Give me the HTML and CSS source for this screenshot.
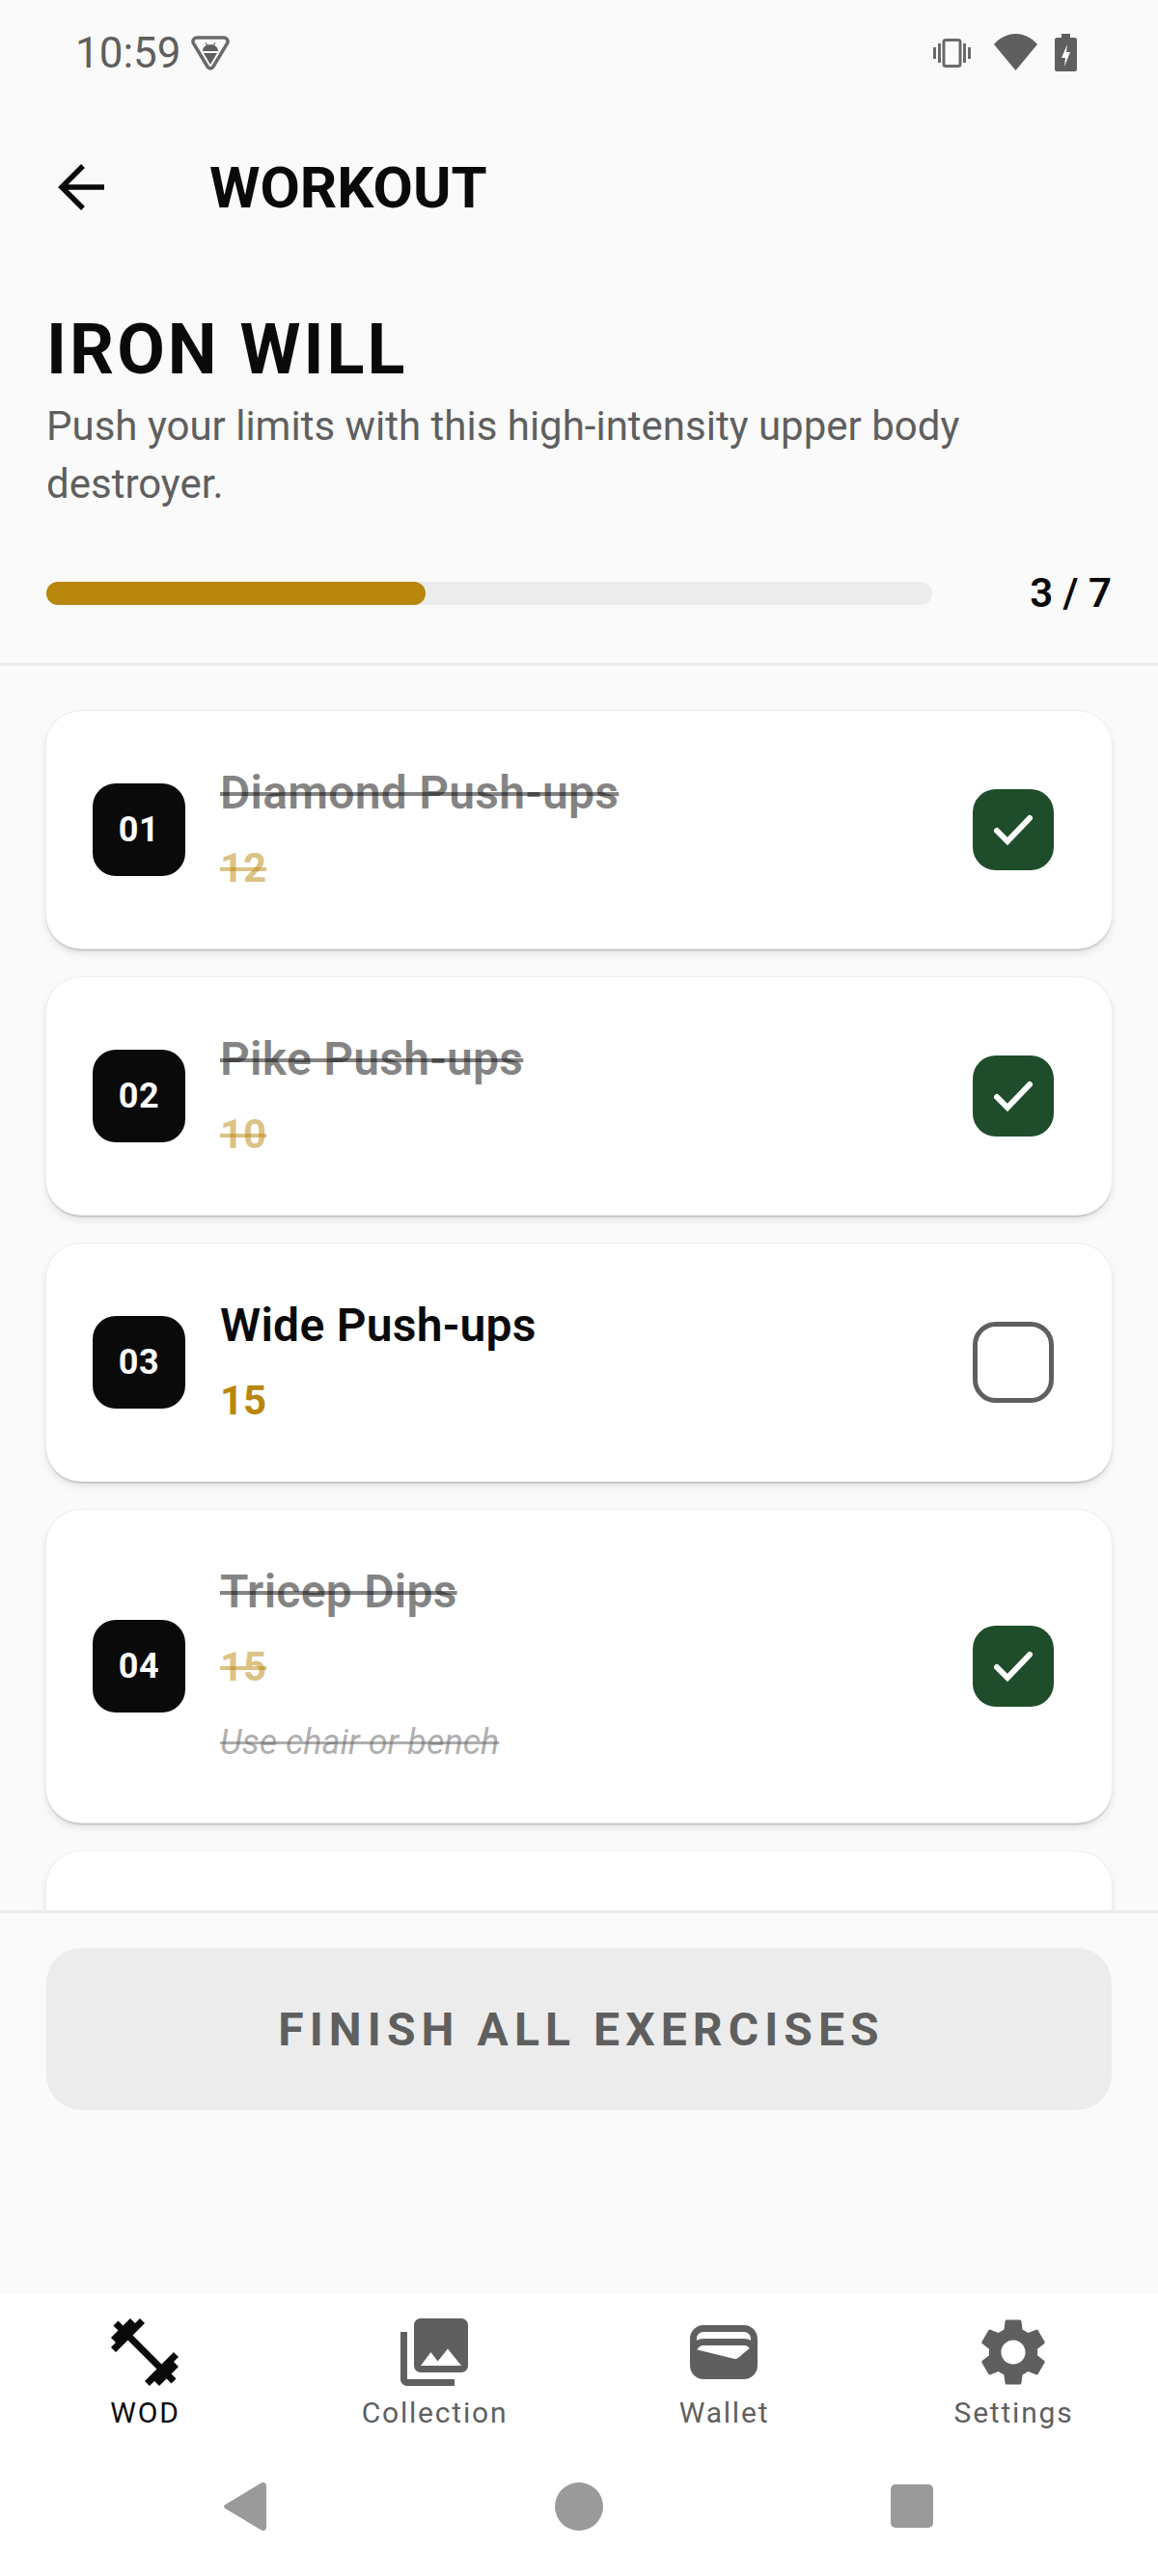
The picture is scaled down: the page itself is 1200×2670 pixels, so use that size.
FILE: index.html
```html
<!DOCTYPE html>
<html lang="en">
<head>
  <meta charset="UTF-8">
  <meta name="viewport" content="width=device-width, initial-scale=1.0">
  <title>Workout</title>
  <link rel="stylesheet" href="styles.css">
</head>
<body>
  <div class="status-bar">
    <div class="status-left">
      <span class="clock">10:59</span>
      <svg class="shield" viewBox="0 0 40 36">
        <path d="M6 2h28c3 0 5 3 3.500 6L23 32c-1.500 2.500-4.500 2.500-6 0L2.500 8C1 5 3 2 6 2z" fill="none" stroke="#6a6a6a" stroke-width="3.500"/>
        <path d="M12 16c0-3 1.500-5 4-6l-1.500-2.500 1-.5L17 9.500c2-.5 4-.5 6 0L24.500 7l1 .5L24 10c2.500 1 4 3 4 6z" fill="#5f5f5f"/>
        <path d="M13 18h14l-7 12z" fill="#5f5f5f"/>
      </svg>
    </div>
    <div class="status-right">
      <svg class="ic-vibrate" viewBox="0 0 41 30">
        <rect x="12" y="1.500" width="17" height="27" rx="2" fill="none" stroke="#6a6a6a" stroke-width="3"/>
        <path d="M1 9h3v12H1zM6 5h3v20H6zM32 5h3v20h-3zM37 9h3v12h-3z" fill="#6a6a6a"/>
      </svg>
      <svg class="ic-wifi" viewBox="0 0 45 38">
        <path d="M0 11C6 4 14 0 22.500 0S39 4 45 11L22.500 38z" fill="#5f5f5f"/>
      </svg>
      <svg class="ic-battery" viewBox="0 0 23 39">
        <path d="M7 0h9v4h5c1 0 2 1 2 2v31c0 1-1 2-2 2H2c-1 0-2-1-2-2V6c0-1 1-2 2-2h5z" fill="#5f5f5f"/>
        <path d="M13 11l-6 14h4l-1 9 6-15h-4z" fill="#fff"/>
      </svg>
    </div>
  </div>

  <div class="toolbar">
    <svg class="back" viewBox="0 0 48 48">
      <path d="M48 24H4M26 2L4 24l22 22" fill="none" stroke="#0a0a0a" stroke-width="5.500"/>
    </svg>
    <h1 class="toolbar-title">WORKOUT</h1>
  </div>

  <div class="header">
    <h2 class="wod-name">IRON WILL</h2>
    <p class="wod-desc">Push your limits with this high-intensity upper body destroyer.</p>
    <div class="progress-row">
      <div class="progress-track"><div class="progress-fill"></div></div>
      <span class="progress-count">3 / 7</span>
    </div>
  </div>

  <div class="list">
    <div class="card done">
      <div class="badge">01</div>
      <div class="info">
        <div class="ex-name">Diamond Push-ups</div>
        <div class="ex-reps">12</div>
      </div>
      <div class="check"><svg viewBox="0 0 84 84"><path d="M25 43l11 11 23-24"/></svg></div>
    </div>
    <div class="card done">
      <div class="badge">02</div>
      <div class="info">
        <div class="ex-name">Pike Push-ups</div>
        <div class="ex-reps">10</div>
      </div>
      <div class="check"><svg viewBox="0 0 84 84"><path d="M25 43l11 11 23-24"/></svg></div>
    </div>
    <div class="card">
      <div class="badge">03</div>
      <div class="info">
        <div class="ex-name">Wide Push-ups</div>
        <div class="ex-reps">15</div>
      </div>
      <div class="check"></div>
    </div>
    <div class="card done">
      <div class="badge">04</div>
      <div class="info">
        <div class="ex-name">Tricep Dips</div>
        <div class="ex-reps">15</div>
        <div class="ex-note">Use chair or bench</div>
      </div>
      <div class="check"><svg viewBox="0 0 84 84"><path d="M25 43l11 11 23-24"/></svg></div>
    </div>
    <div class="card"></div>
  </div>

  <div class="footer">
    <button class="finish-btn">FINISH ALL EXERCISES</button>
  </div>

  <div class="nav">
    <div class="nav-item active">
      <svg viewBox="0 0 24 24"><path d="M20.570 14.860L22 13.430 20.570 12 17 15.570 8.430 7 12 3.430 10.570 2 9.140 3.430 7.710 2 5.570 4.140 4.140 2.710 2.710 4.140l1.430 1.430L2 7.710l1.430 1.430L2 10.570 3.430 12 7 8.430 15.570 17 12 20.570 13.430 22l1.430-1.430L16.290 22l2.140-2.140 1.430 1.430 1.430-1.430-1.430-1.430L22 16.290z"/></svg>
      <span>WOD</span>
    </div>
    <div class="nav-item">
      <svg viewBox="0 0 24 24"><path d="M22 16V4c0-1.100-.9-2-2-2H8c-1.100 0-2 .9-2 2v12c0 1.100.9 2 2 2h12c1.100 0 2-.9 2-2zm-11-4l2.030 2.710L16 11l4 5H8l3-4zM2 6v14c0 1.100.9 2 2 2h14v-2H4V6H2z"/></svg>
      <span>Collection</span>
    </div>
    <div class="nav-item">
      <svg viewBox="0 0 24 24"><path d="M18 4H6C3.790 4 2 5.790 2 8v8c0 2.210 1.790 4 4 4h12c2.210 0 4-1.790 4-4V8c0-2.210-1.790-4-4-4zm-1.860 9.770c-.24.2-.57.28-.88.2L4.150 11.250C4.450 10.520 5.160 10 6 10h12c.67 0 1.260.34 1.630.84l-3.490 2.930zM6 6h12c1.100 0 2 .9 2 2v.55c-.59-.34-1.270-.55-2-.55H6c-.73 0-1.410.21-2 .55V8c0-1.100.9-2 2-2z"/></svg>
      <span>Wallet</span>
    </div>
    <div class="nav-item">
      <svg viewBox="0 0 24 24"><path d="M19.140 12.940c.04-.3.06-.61.06-.94 0-.32-.02-.64-.07-.94l2.030-1.580c.18-.14.23-.41.12-.61l-1.920-3.320c-.12-.22-.37-.29-.59-.22l-2.390.96c-.5-.38-1.030-.7-1.620-.94l-.36-2.540c-.04-.24-.24-.41-.48-.41h-3.840c-.24 0-.43.17-.47.41l-.36 2.540c-.59.24-1.130.57-1.620.94l-2.390-.96c-.22-.08-.47 0-.59.22L2.740 8.870c-.12.21-.08.47.12.61l2.030 1.580c-.05.3-.09.63-.09.94s.02.64.07.94l-2.030 1.580c-.18.14-.23.41-.12.61l1.920 3.320c.12.22.37.29.59.22l2.390-.96c.5.38 1.030.7 1.620.94l.36 2.540c.05.24.24.41.48.41h3.840c.24 0 .44-.17.47-.41l.36-2.540c.59-.24 1.130-.56 1.620-.94l2.390.96c.22.08.47 0 .59-.22l1.920-3.320c.12-.22.07-.47-.12-.61l-2.010-1.580zM12 15.600c-1.980 0-3.600-1.620-3.600-3.600s1.620-3.600 3.600-3.600 3.600 1.620 3.600 3.600-1.620 3.600-3.600 3.600z"/></svg>
      <span>Settings</span>
    </div>
  </div>

  <div class="sys-nav">
    <svg class="sys-back" viewBox="0 0 44 50"><path d="M38 1c3-2 6-1 6 3v42c0 4-3 5-6 3L3 28c-4-2-4-4 0-6z" fill="#9a9a9a"/></svg>
    <div class="sys-home"></div>
    <div class="sys-recent"></div>
  </div>
</body>
</html>
```

FILE: styles.css
```css
* {
  box-sizing: border-box;
}
body {
  margin: 0;
  width: 1200px;
  height: 2670px;
  overflow: hidden;
  display: flex;
  flex-direction: column;
  background: #fafafa;
  font-family: Roboto, sans-serif;
  color: #0a0a0a;
}

/* status bar */
.status-bar {
  height: 114px;
  flex-shrink: 0;
  display: flex;
  justify-content: space-between;
  padding: 30px 84px 0 78px;
  color: #5f5f5f;
}
.status-left {
  display: flex;
  align-items: flex-start;
  gap: 10px;
}
.clock {
  font-size: 44px;
  line-height: 50px;
}
.shield {
  width: 40px;
  height: 36px;
  margin-top: 7px;
}
.status-right {
  display: flex;
  align-items: flex-start;
}
.ic-vibrate {
  width: 41px;
  height: 30px;
  margin-top: 10px;
}
.ic-wifi {
  width: 45px;
  height: 38px;
  margin: 5px 0 0 23px;
}
.ic-battery {
  width: 23px;
  height: 39px;
  margin: 5px 0 0 18px;
}

/* toolbar */
.toolbar {
  height: 160px;
  flex-shrink: 0;
  display: flex;
  align-items: center;
  padding-left: 60px;
}
.back {
  width: 48px;
  height: 48px;
}
.toolbar-title {
  margin: 2px 0 0 109px;
  font-size: 60px;
  font-weight: 700;
  line-height: 70px;
}

/* header */
.header {
  flex-shrink: 0;
  height: 416px;
  padding: 47px 48px 0;
  border-bottom: 3px solid #ececec;
}
.wod-name {
  margin: 0 0 7px;
  font-size: 72px;
  font-weight: 700;
  letter-spacing: 3px;
  line-height: 84px;
}
.wod-desc {
  margin: 0;
  font-size: 42px;
  line-height: 60px;
  color: #5f5f5f;
}
.progress-row {
  display: flex;
  align-items: center;
  margin-top: 58px;
}
.progress-track {
  width: 918px;
  height: 24px;
  border-radius: 12px;
  background: #ececec;
}
.progress-fill {
  width: 42.8%;
  height: 100%;
  border-radius: 12px;
  background: #b8860b;
}
.progress-count {
  margin-left: auto;
  font-size: 42px;
  font-weight: 600;
}

/* exercise list */
.list {
  flex: 1;
  min-height: 0;
  overflow: hidden;
  padding: 47px 48px 0;
  display: flex;
  flex-direction: column;
  gap: 30px;
}
.card {
  flex-shrink: 0;
  display: flex;
  align-items: center;
  min-height: 246px;
  padding: 55px 48px 59px;
  border-radius: 36px;
  background: #fff;
  box-shadow: 0 0 0 1px #efefef, 0 2px 2px rgba(0,0,0,0.24), 0 5px 9px rgba(0,0,0,0.1);
}
.badge {
  width: 96px;
  height: 96px;
  flex-shrink: 0;
  display: flex;
  align-items: center;
  justify-content: center;
  margin: 4px 36px 0 0;
  border-radius: 24px;
  background: #0a0a0a;
  color: #fff;
  font-size: 36px;
  font-weight: 700;
  letter-spacing: 0.5px;
}
.info {
  flex: 1;
}
.ex-name {
  font-size: 48px;
  font-weight: 600;
  letter-spacing: 0.25px;
  line-height: 60px;
}
.ex-reps {
  margin-top: 24px;
  font-size: 42px;
  font-weight: 700;
  line-height: 48px;
  color: #b8860b;
}
.ex-note {
  margin-top: 30px;
  font-size: 36px;
  font-style: italic;
  line-height: 48px;
  color: rgba(95,95,95,0.5);
  text-decoration: line-through;
}
.done .ex-name {
  color: rgba(10,10,10,0.5);
  text-decoration: line-through;
}
.done .ex-reps {
  color: rgba(184,134,11,0.5);
  text-decoration: line-through;
}
.check {
  width: 84px;
  height: 84px;
  flex-shrink: 0;
  margin: 4px 12px 0 0;
  border: 5px solid #5f5f5f;
  border-radius: 24px;
}
.done .check {
  border: 0;
  background: #1f4d2b;
}
.check svg {
  display: block;
  width: 84px;
  height: 84px;
  fill: none;
  stroke: #fff;
  stroke-width: 6;
  stroke-linecap: round;
}

/* finish button */
.footer {
  flex-shrink: 0;
  height: 398px;
  padding: 36px 48px 0;
  border-top: 3px solid #ececec;
  background: #fafafa;
  position: relative;
}
.finish-btn {
  display: block;
  width: 100%;
  height: 168px;
  padding: 0 0 0 5px;
  border: none;
  border-radius: 36px;
  background: #ececec;
  color: #5f5f5f;
  font-family: Roboto, sans-serif;
  font-size: 48px;
  font-weight: 700;
  letter-spacing: 6.1px;
}

/* bottom nav */
.nav {
  flex-shrink: 0;
  height: 150px;
  display: flex;
  padding-top: 18px;
  background: #fff;
  box-shadow: 0 -3px 2px rgba(0,0,0,0.05);
}
.nav-item {
  flex: 1;
  display: flex;
  flex-direction: column;
  align-items: center;
  color: #5f5f5f;
  font-size: 30px;
  letter-spacing: 1.8px;
  line-height: 41px;
}
.nav-item svg {
  width: 84px;
  height: 84px;
  fill: #5f5f5f;
}
.nav-item span {
  margin-left: 1px;
}
.nav-item.active {
  color: #0a0a0a;
}
.nav-item.active svg {
  fill: #0a0a0a;
}

/* android nav */
.sys-nav {
  flex-shrink: 0;
  height: 142px;
  display: flex;
  align-items: flex-start;
  padding-top: 45px;
  background: #fff;
}
.sys-back {
  width: 44px;
  height: 50px;
  margin-left: 232px;
}
.sys-home {
  width: 50px;
  height: 50px;
  margin-left: 299px;
  border-radius: 50%;
  background: #9a9a9a;
}
.sys-recent {
  width: 44px;
  height: 45px;
  margin: 2px 0 0 298px;
  border-radius: 5px;
  background: #9a9a9a;
}
```
